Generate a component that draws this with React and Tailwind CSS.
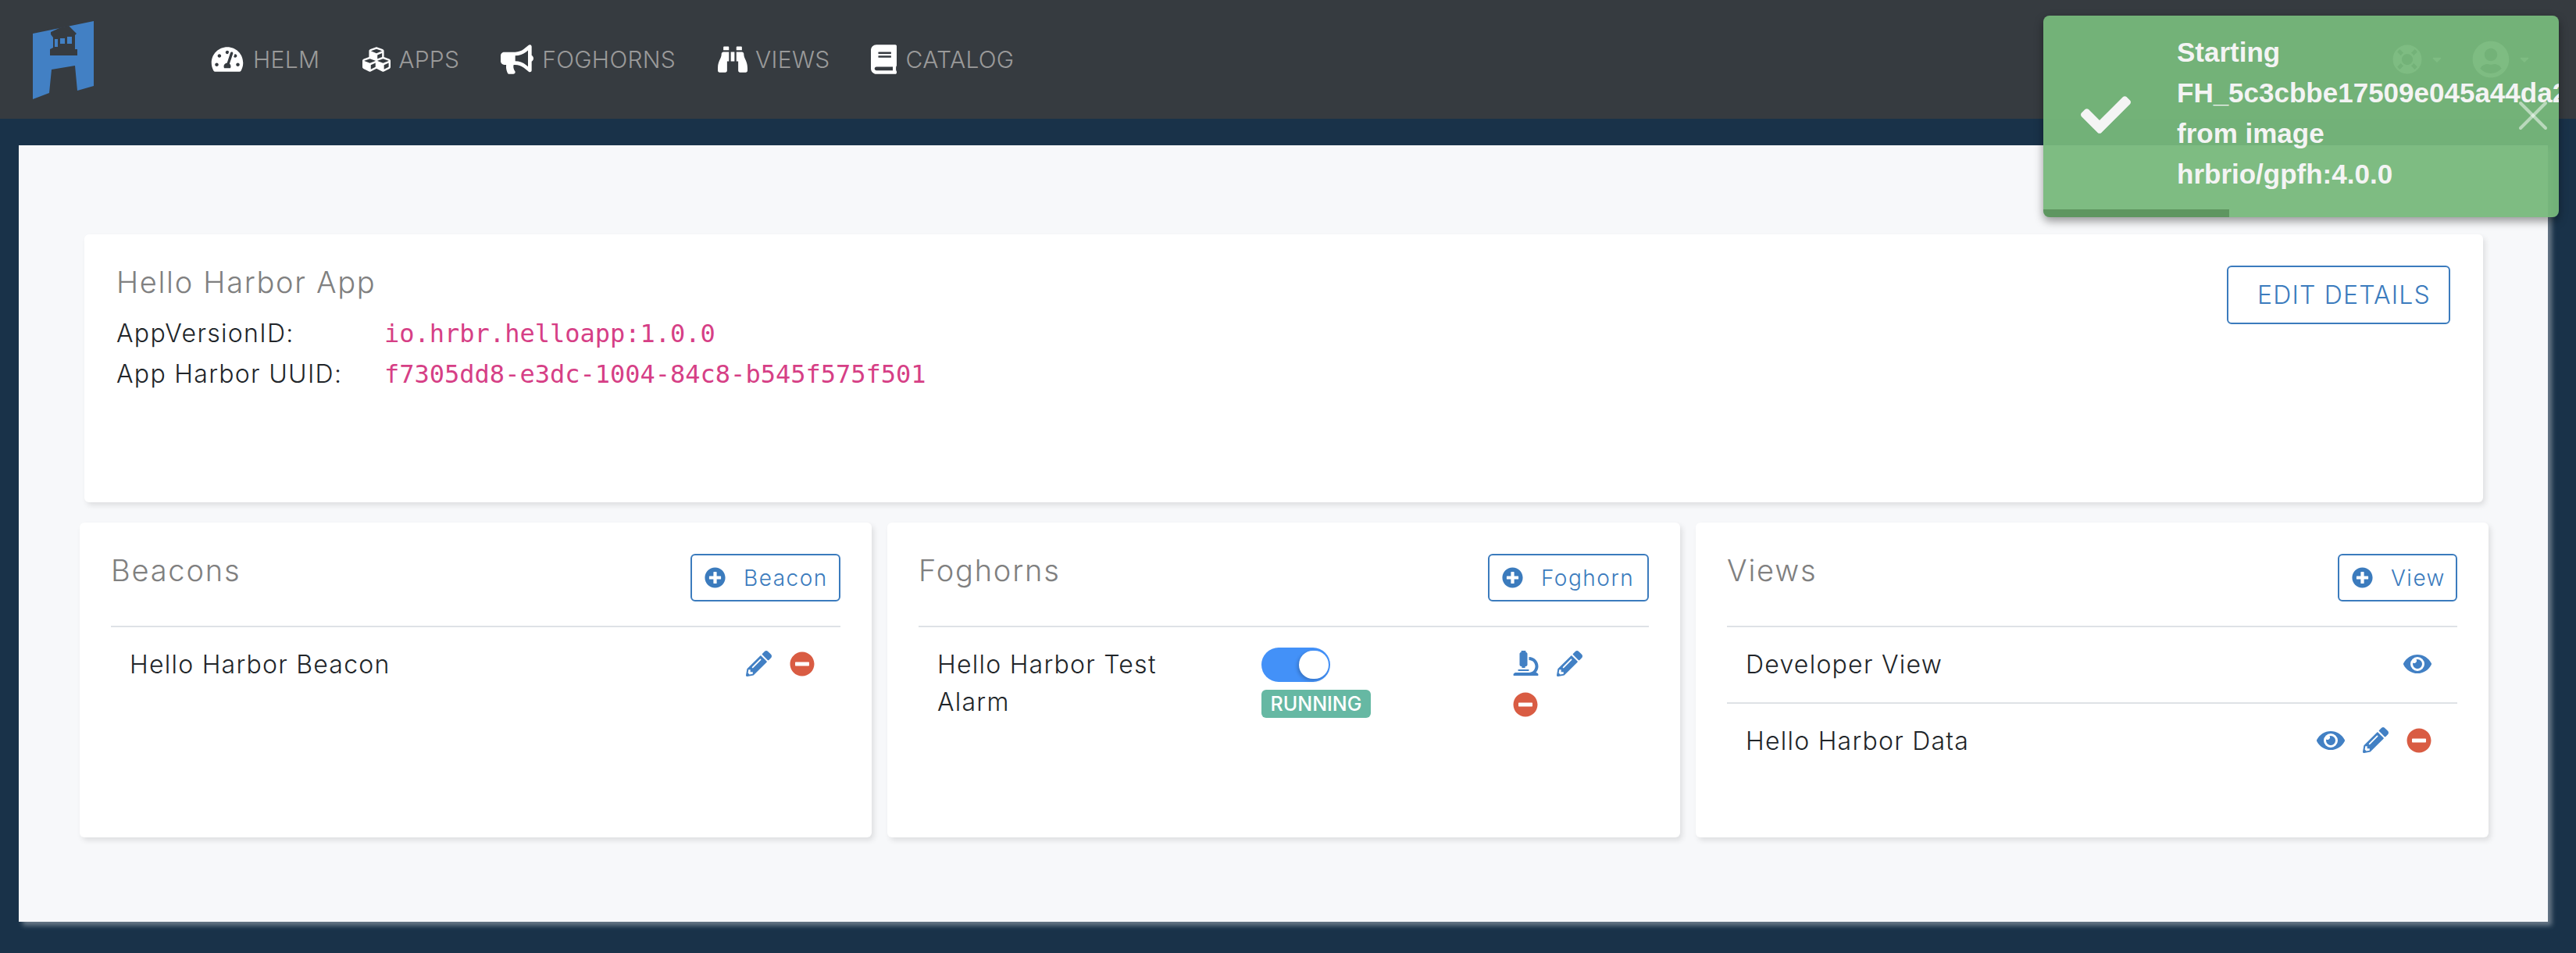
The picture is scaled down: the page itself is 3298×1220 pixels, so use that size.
import React from "react";
import {
  FaTachometerAlt,
  FaCubes,
  FaBullhorn,
  FaBinoculars,
  FaBook,
  FaLifeRing,
  FaUserCircle,
  FaCaretDown,
  FaCheck,
  FaPlusCircle,
  FaMinusCircle,
  FaPencilAlt,
  FaEye,
  FaMicroscope,
} from "react-icons/fa";
import { X } from "lucide-react";

const sans = "font-['Inter','Liberation_Sans',sans-serif]";

function Logo() {
  return (
    <svg viewBox="0 0 120 130" className="w-[120px] h-[130px] shrink-0">
      <path fill="#4280c4" d="M22 32 L100 16 L100 99 L79 105 L76 73 L46 78 L43 108 L22 116 Z" />
      <path
        fill="#363b40"
        d="M58 24 L50 26 L68 22 L78 32 L76 34 L76 52 L79 52 L79 60 L44 60 L44 52 L48 50 L48 37 L45 33 L45 30 Z"
      />
      <path fill="#4280c4" d="M50 39h4v10h-4z M57 38h6v7h-6z M66 36h6v9h-6z" />
    </svg>
  );
}

function NavItem({ icon: Icon, label, iconClass, gap }) {
  return (
    <div className={`flex items-center ${gap}`}>
      <Icon className={`text-white ${iconClass}`} />
      <span className="text-[30px] font-light tracking-[0.3px] text-[#9a9a9a] leading-none">{label}</span>
    </div>
  );
}

function AddButton({ label, width }) {
  return (
    <button className={`flex items-center h-[61px] ${width} pl-[16px] border-2 border-[#3b7bbd] rounded-md text-[#3b7bbd] text-[28px] font-light tracking-[1.5px]`}>
      <FaPlusCircle className="w-[27px] h-[27px] mr-[23px] shrink-0" />
      {label}
    </button>
  );
}

function Pencil() {
  return <FaPencilAlt className="w-[33px] h-[33px] text-[#4280c4]" />;
}

function Minus() {
  return <FaMinusCircle className="w-[32px] h-[32px] text-[#d95c43]" />;
}

function Eye() {
  return <FaEye className="w-[36px] h-[32px] text-[#4280c4]" />;
}

function Panel({ title, button, children }) {
  return (
    <div className="h-[403px] bg-white rounded-md shadow-[3px_4px_7px_rgba(0,0,0,0.1)] px-[40px] pt-[40px]">
      <div className="flex justify-between items-start h-[94px] border-b-2 border-[#dee2e6]">
        <h3 className="text-[38px] font-light tracking-[1.8px] text-[#808080] leading-[42px]">{title}</h3>
        {button}
      </div>
      {children}
    </div>
  );
}

function Row({ name, first, children }) {
  return (
    <div className={`flex justify-between items-start pl-[24px] pr-[33px] pt-[24px] pb-[24px] ${first ? "" : "border-t-2 border-[#dee2e6]"}`}>
      <span className="text-[32px] font-light tracking-[1.25px] text-[#212529] leading-[48px]">{name}</span>
      <div className="flex items-center gap-[23px] h-[40px] pt-[5px]">{children}</div>
    </div>
  );
}

function Toast() {
  return (
    <div className="absolute left-[2616px] top-[20px] w-[660px] h-[258px] rounded-lg bg-[#77b87b]/95 shadow-[0_5px_12px_rgba(0,0,0,0.4)] overflow-hidden text-[#f4f4f4]">
      <FaCheck className="absolute left-[48px] top-[95px] w-[64px] h-[64px]" />
      <div className="absolute left-[171px] top-[21px] w-[600px] font-['Liberation_Sans',sans-serif] font-bold text-[35px] leading-[52px]">
        <div>Starting</div>
        <div>FH_5c3cbbe17509e045a44da2</div>
        <div>from image</div>
        <div>hrbrio/gpfh:4.0.0</div>
      </div>
      <X className="absolute left-[595px] top-[96px] w-[64px] h-[64px] text-white/50" strokeWidth={1.5} />
      <div className="absolute left-0 bottom-0 h-[10px] w-[238px] bg-[#5e9660]" />
    </div>
  );
}

export default function App() {
  return (
    <div className={`relative h-[1220px] bg-[#193249] overflow-hidden ${sans}`}>
      <header className="flex items-center h-[152px] bg-[#363b40] pl-[20px] pr-[57px]">
        <Logo />
        <nav className="flex items-center ml-[130px] gap-[53px]">
          <NavItem icon={FaTachometerAlt} label="HELM" iconClass="w-[42px] h-[36px]" gap="gap-[12px]" />
          <NavItem icon={FaCubes} label="APPS" iconClass="w-[40px] h-[36px]" gap="gap-[8px]" />
          <NavItem icon={FaBullhorn} label="FOGHORNS" iconClass="w-[42px] h-[38px]" gap="gap-[11px]" />
          <NavItem icon={FaBinoculars} label="VIEWS" iconClass="w-[40px] h-[38px]" gap="gap-[9px]" />
          <NavItem icon={FaBook} label="CATALOG" iconClass="w-[33px] h-[38px]" gap="gap-[11px]" />
        </nav>
        <div className="ml-auto flex items-center text-white">
          <FaLifeRing className="w-[38px] h-[38px]" />
          <FaCaretDown className="w-[18px] h-[18px] ml-[10px]" />
          <FaUserCircle className="w-[48px] h-[48px] ml-[36px]" />
          <FaCaretDown className="w-[18px] h-[18px] ml-[10px]" />
        </div>
      </header>

      <main className="ml-[24px] mr-[36px] mt-[34px] h-[994px] bg-[#f7f8fa] shadow-[5px_5px_6px_rgba(255,255,255,0.35)] pt-[114px] pl-[78px] pr-[76px]">
        <section className="flex justify-between items-start h-[343px] ml-[6px] mr-[7px] bg-white rounded-md shadow-[3px_4px_7px_rgba(0,0,0,0.1)] pl-[41px] pr-[42px] pt-[38px]">
          <div>
            <h2 className="text-[38px] font-light tracking-[1.7px] text-[#808080] leading-[46px] mb-[17px]">Hello Harbor App</h2>
            <div className="flex items-center h-[52px]">
              <span className="w-[343px] text-[32px] font-light tracking-[1.3px] text-[#212529]">AppVersionID:</span>
              <code className="font-['DejaVu_Sans_Mono',monospace] text-[32px] text-[#d63f86]">io.hrbr.helloapp:1.0.0</code>
            </div>
            <div className="flex items-center h-[52px]">
              <span className="w-[343px] text-[32px] font-light tracking-[1.3px] text-[#212529]">App Harbor UUID:</span>
              <code className="font-['DejaVu_Sans_Mono',monospace] text-[32px] text-[#d63f86]">f7305dd8-e3dc-1004-84c8-b545f575f501</code>
            </div>
          </div>
          <button className="mt-[2px] w-[286px] h-[75px] border-2 border-[#3b7bbd] rounded-md text-[#3b7bbd] text-[32px] font-light tracking-[1.2px] pl-[14px]">
            EDIT DETAILS
          </button>
        </section>

        <div className="grid grid-cols-[1014px_1015px_1fr] gap-[20px] mt-[26px]">
          <Panel title="Beacons" button={<AddButton label="Beacon" width="w-[192px]" />}>
            <Row name="Hello Harbor Beacon" first>
              <Pencil />
              <Minus />
            </Row>
          </Panel>

          <Panel title="Foghorns" button={<AddButton label="Foghorn" width="w-[206px]" />}>
            <div className="grid grid-cols-[415px_322px_1fr] pl-[24px] pt-[24px]">
              <span className="pr-[90px] text-[32px] font-light tracking-[1.25px] text-[#212529] leading-[48px]">Hello Harbor Test Alarm</span>
              <div className="flex flex-col items-start pt-[2px]">
                <div className="relative w-[88px] h-[44px] rounded-full bg-[#4391f8]">
                  <div className="absolute right-[2px] top-[4px] w-[38px] h-[36px] rounded-full bg-white shadow-[-2px_2px_4px_rgba(0,0,0,0.2)]" />
                </div>
                <span className="mt-[10px] w-[140px] h-[36px] flex items-center justify-center rounded-md bg-[#66b8a3] text-white text-[25px] font-medium leading-none">RUNNING</span>
              </div>
              <div className="flex flex-wrap items-start gap-x-[23px] gap-y-[14px] pt-[6px] w-[100px]">
                <FaMicroscope className="w-[33px] h-[32px] text-[#4280c4]" />
                <Pencil />
                <Minus />
              </div>
            </div>
          </Panel>

          <Panel title="Views" button={<AddButton label="View" width="w-[153px]" />}>
            <Row name="Developer View" first>
              <Eye />
            </Row>
            <Row name="Hello Harbor Data">
              <Eye />
              <Pencil />
              <Minus />
            </Row>
          </Panel>
        </div>
      </main>

      <Toast />
    </div>
  );
}
